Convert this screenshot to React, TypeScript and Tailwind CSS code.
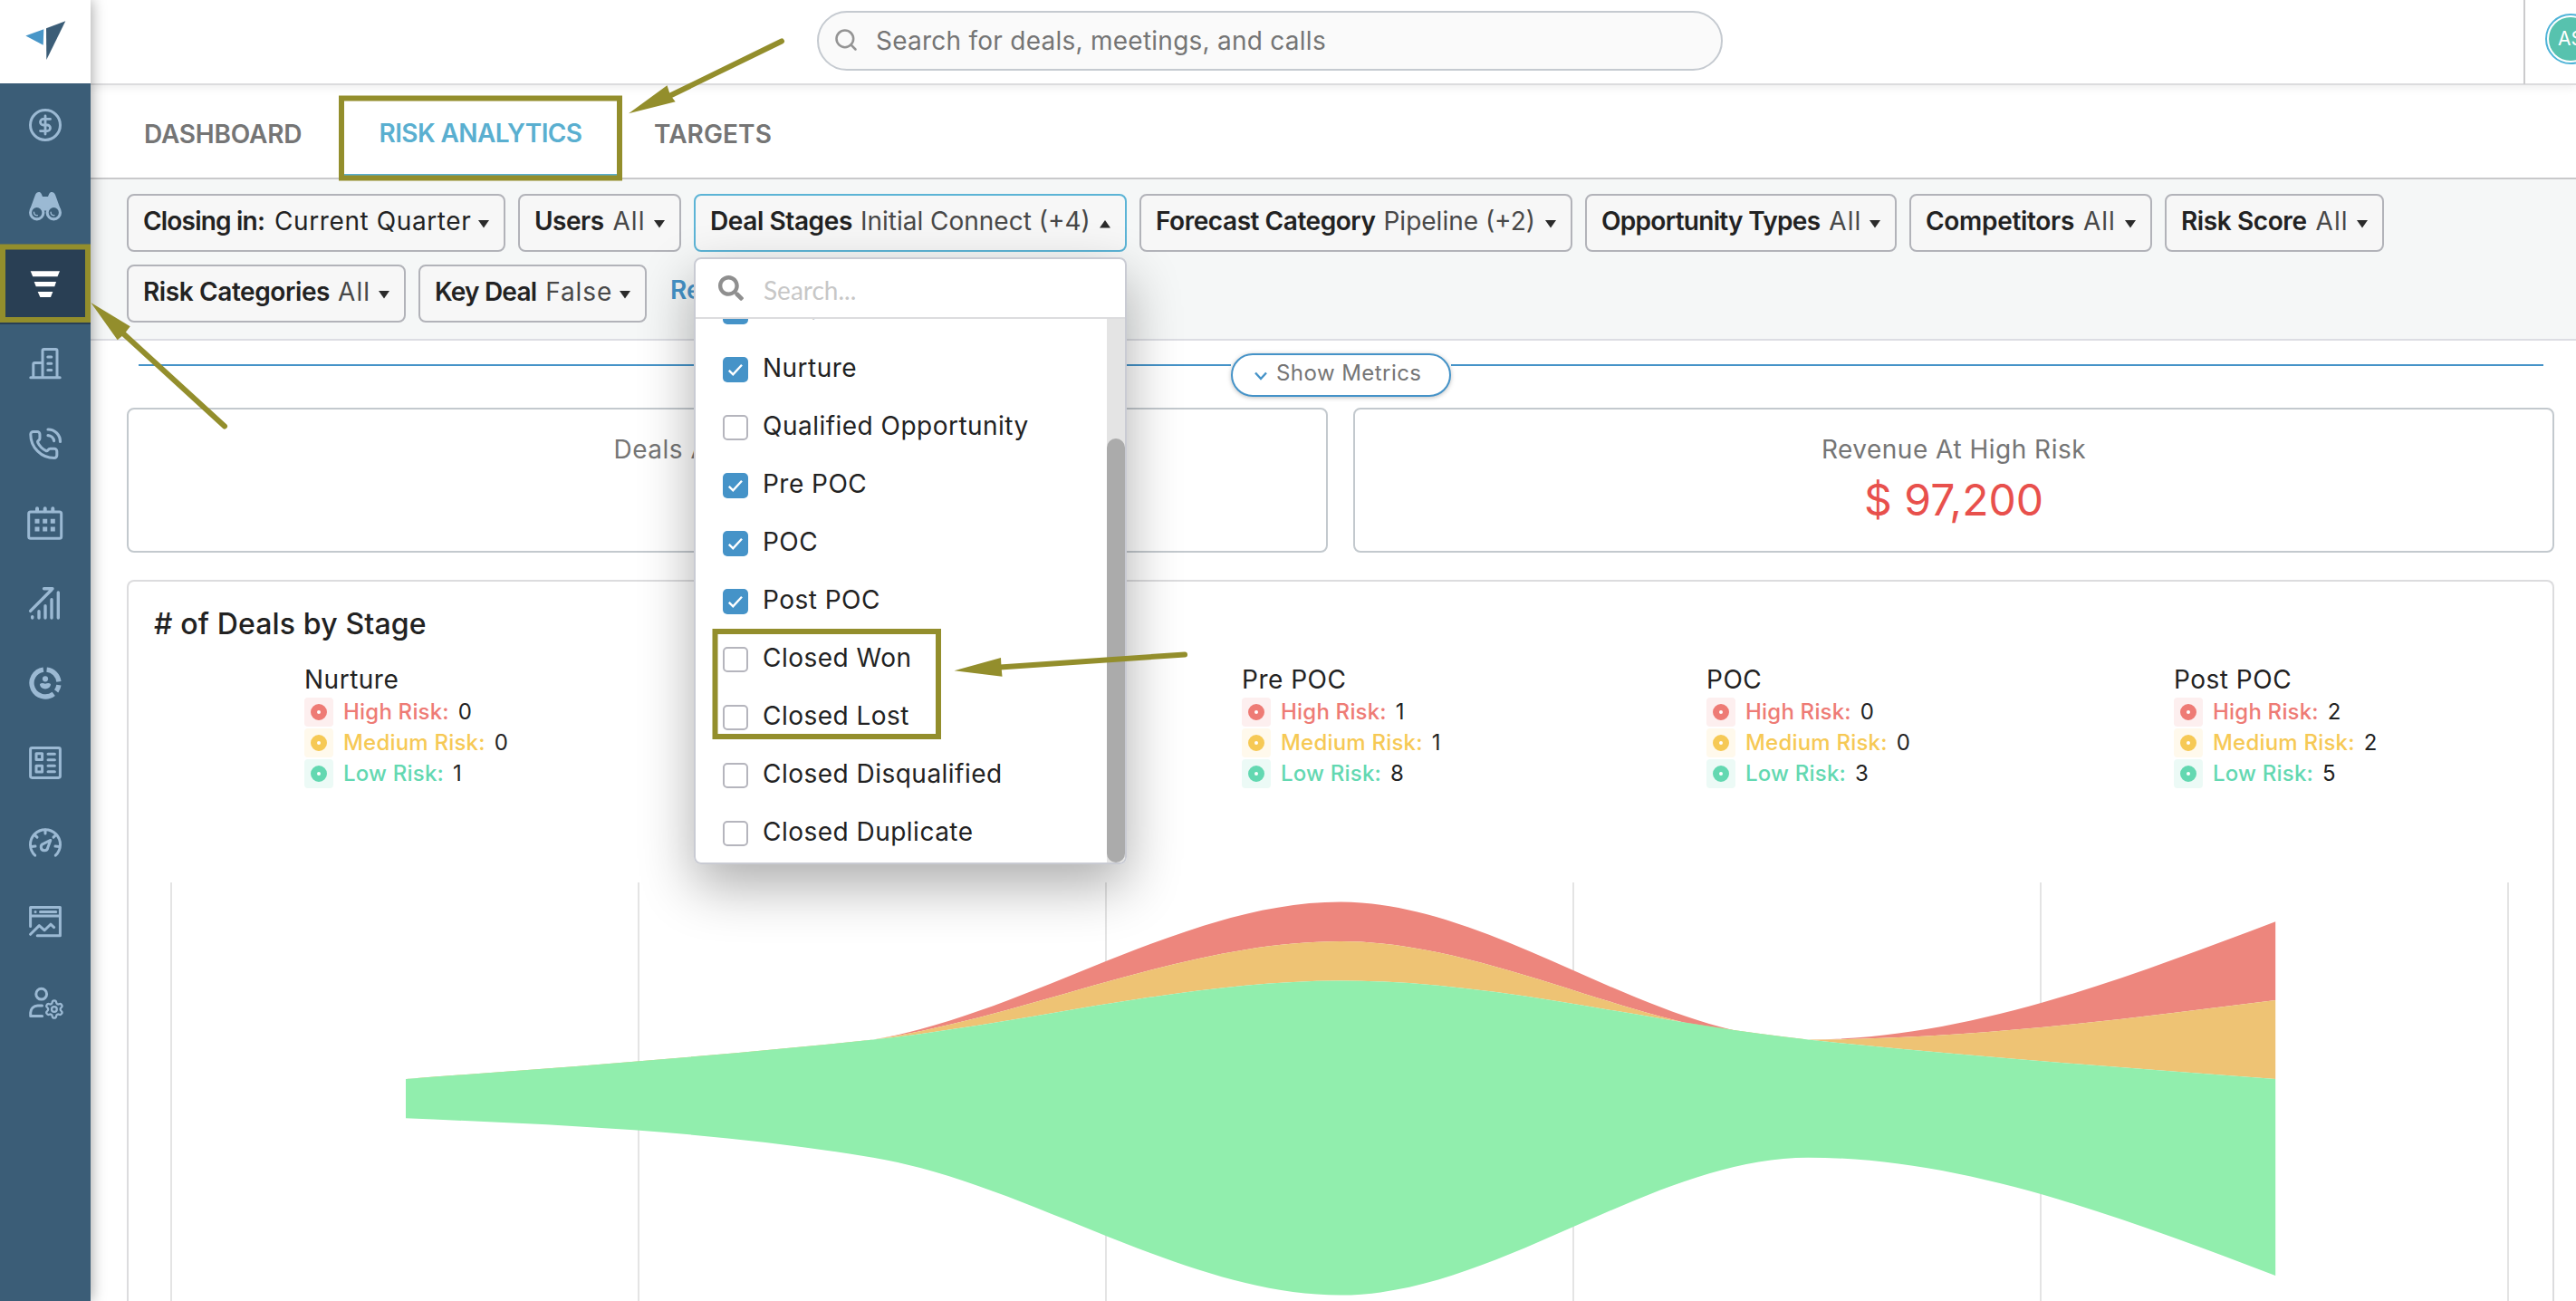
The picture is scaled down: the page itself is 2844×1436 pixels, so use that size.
import React from 'react';
import { Search, Settings } from 'lucide-react';
import { FaSearch } from 'react-icons/fa';
import clsx from 'clsx';

interface StageItem {
  name: string;
  checked: boolean;
}

interface FilterItem {
  label: string;
  value: string;
  width: string;
  labelClass: string;
  valueClass: string;
  open?: boolean;
}

interface StageStat {
  name: string;
  high: number;
  medium: number;
  low: number;
  indent: string;
  hidden?: boolean;
}

const stageOptions: StageItem[] = [
  { name: 'Initial Connect', checked: true },
  { name: 'Nurture', checked: true },
  { name: 'Qualified Opportunity', checked: false },
  { name: 'Pre POC', checked: true },
  { name: 'POC', checked: true },
  { name: 'Post POC', checked: true },
  { name: 'Closed Won', checked: false },
  { name: 'Closed Lost', checked: false },
  { name: 'Closed Disqualified', checked: false },
  { name: 'Closed Duplicate', checked: false },
];

const filters: FilterItem[] = [
  { label: 'Closing in:', value: 'Current Quarter', width: 'w-[418px]', labelClass: 'tracking-[-0.8px]', valueClass: 'ml-[11px] tracking-[0.6px] text-[#222]' },
  { label: 'Users', value: 'All', width: 'w-[180px]', labelClass: 'tracking-[-0.5px]', valueClass: 'ml-[10px] tracking-[1px] text-[#484848]' },
  { label: 'Deal Stages', value: 'Initial Connect (+4)', width: 'w-[478px]', labelClass: 'tracking-[-0.4px]', valueClass: 'ml-[9px] tracking-[0px] text-[#484848]', open: true },
  { label: 'Forecast Category', value: 'Pipeline (+2)', width: 'w-[478px]', labelClass: 'tracking-[-0.45px]', valueClass: 'ml-[9px] tracking-[0px] text-[#484848]' },
  { label: 'Opportunity Types', value: 'All', width: 'w-[344px]', labelClass: 'tracking-[-0.7px]', valueClass: 'ml-[10px] tracking-[1px] text-[#484848]' },
  { label: 'Competitors', value: 'All', width: 'w-[268px]', labelClass: 'tracking-[-0.3px]', valueClass: 'ml-[10px] tracking-[1px] text-[#484848]' },
  { label: 'Risk Score', value: 'All', width: 'w-[242px]', labelClass: 'tracking-[-0.4px]', valueClass: 'ml-[10px] tracking-[1px] text-[#484848]' },
  { label: 'Risk Categories', value: 'All', width: 'w-[308px]', labelClass: 'tracking-[-0.4px]', valueClass: 'ml-[9px] tracking-[1px] text-[#484848]' },
  { label: 'Key Deal', value: 'False', width: 'w-[252px]', labelClass: 'tracking-[-0.8px]', valueClass: 'ml-[10px] tracking-[0.9px] text-[#484848]' },
];

const stages: StageStat[] = [
  { name: 'Nurture', high: 0, medium: 0, low: 1, indent: 'pl-[148px]' },
  { name: 'Qualified Opportunity', high: 0, medium: 0, low: 3, indent: 'pl-[148px]', hidden: true },
  { name: 'Pre POC', high: 1, medium: 1, low: 8, indent: 'pl-[151px]' },
  { name: 'POC', high: 0, medium: 0, low: 3, indent: 'pl-[148px]' },
  { name: 'Post POC', high: 2, medium: 2, low: 5, indent: 'pl-[148px]' },
];

const navIcons: { id: string; active?: boolean; icon: React.ReactNode }[] = [
  {
    id: 'deals',
    icon: (
      <>
        <circle cx="20" cy="20" r="16.5" />
        <path d="M25.5 13.4h-7.7a3.3 3.3 0 0 0 0 6.6h4.4a3.3 3.3 0 0 1 0 6.6h-7.7M20 10v20" strokeWidth="2.8" />
      </>
    ),
  },
  {
    id: 'insights',
    icon: (
      <>
        <path
          d="M2.8 26C5 20 7 14 9 9c.8-2.4 3-3.4 4.8-2.9C15.4 6.6 16 8.5 17 11h6c1-2.5 1.6-4.4 3.2-4.9 1.8-.5 4 .5 4.8 2.9 2 5 4 11 6.2 17l-12 5-3.2-4.500h-4L14.8 31z"
          fill="currentColor"
          stroke="none"
        />
        <circle cx="10.7" cy="28.7" r="8.7" fill="currentColor" stroke="none" />
        <circle cx="29.3" cy="28.7" r="8.7" fill="currentColor" stroke="none" />
        <circle cx="10.7" cy="28.7" r="5.6" fill="#3b5d77" stroke="none" />
        <circle cx="29.3" cy="28.7" r="5.6" fill="#3b5d77" stroke="none" />
        <path d="M7.5 28.2a3.4 3.4 0 0 0 3.8 3.6M26.1 28.2a3.4 3.4 0 0 0 3.8 3.6" strokeWidth="1.4" />
      </>
    ),
  },
  {
    id: 'pipeline',
    active: true,
    icon: (
      <g fill="currentColor" stroke="none">
        <path d="M3.7 5.3H36L33.5 11.3H6.2z" />
        <path d="M7.7 17H32L30.3 22.3H9.7z" />
        <path d="M11.7 28H28.3L26 34H14.3z" />
      </g>
    ),
  },
  {
    id: 'accounts',
    icon: (
      <path d="M3.8 34.7H36.2M17 34V5a1.5 1.5 0 0 1 1.5-1.5h13A1.5 1.5 0 0 1 33 5v29M6.8 34V20a1.5 1.5 0 0 1 1.5-1.5H16M22.8 12h4M22.8 19.3h4M22.8 26.4h4" />
    ),
  },
  {
    id: 'calls',
    icon: (
      <>
        <g transform="translate(.9 3.6) scale(1.45)">
          <path
            strokeWidth="2.1"
            d="M13.832 16.568a1 1 0 0 0 1.213-.303l.355-.465A2 2 0 0 1 17 15h3a2 2 0 0 1 2 2v3a2 2 0 0 1-2 2A18 18 0 0 1 2 4a2 2 0 0 1 2-2h3a2 2 0 0 1 2 2v3a2 2 0 0 1-.8 1.6l-.468.351a1 1 0 0 0-.292 1.233 14 14 0 0 0 6.392 6.384"
          />
        </g>
        <path d="M23 4a13.5 13.5 0 0 1 13.5 13.5M23 10.6a7 7 0 0 1 6.6 6" strokeWidth="3.2" />
      </>
    ),
  },
  {
    id: 'calendar',
    icon: (
      <>
        <rect x="1.7" y="7" width="36" height="29.3" rx="2" />
        <path d="M11 3.2v3M19.7 3.2v3M28.3 3.2v3" strokeWidth="4" />
        <path d="M8.5 17.3h5M17.2 17.3h5M25.8 17.3h5M8.5 26h5M17.2 26h5M25.8 26h5" strokeWidth="5" strokeLinecap="butt" />
      </>
    ),
  },
  {
    id: 'forecast',
    icon: <path d="M5.7 34.6v1.4M13 28.7V36M20 22.7V36M27 15.7V36M34.3 8V36M3.6 28.4 27.4 4.5M18.5 3.7H28" strokeWidth="3.4" />,
  },
  {
    id: 'coaching',
    icon: (
      <>
        <g strokeWidth="5.3" strokeLinecap="butt">
          <path d="M21.6 5.1A15 15 0 0 1 34.9 18.4" />
          <path d="M34.9 22.1A15 15 0 0 1 32.1 28.8" />
          <path d="M29.2 31.8A15 15 0 1 1 17.9 5.1" />
        </g>
        <g fill="currentColor" stroke="none">
          <circle cx="20" cy="15.3" r="3.1" />
          <path d="M14 21c2-1.6 4-1 6-.2 2-.8 4-1.4 6 .2 0 3.4-3 5.4-6 5.4s-6-2-6-5.4z" />
        </g>
      </>
    ),
  },
  {
    id: 'reports',
    icon: (
      <>
        <rect x="3.6" y="3.6" width="32.8" height="32.8" rx="1.8" />
        <path d="M10 9.8h6.6v6.6H10zM10 23.3h6.6v6.6H10zM23 10.3h7.4M23 16.7h7.4M23 23.3h7.4M23 29.7h7.4" />
      </>
    ),
  },
  {
    id: 'performance',
    icon: (
      <>
        <path d="M8.7 34.2A16.5 16.5 0 1 1 31.3 34.2" />
        <path d="M20 6v4M8.6 11.8l2.4 2.3M31.4 11.8l-2.4 2.3M4.5 24.6l4.5-.5M35.5 24.6l-4.5-.5M25.8 17.4l-7.6 3.8a3.8 3.8 0 1 0 4.6 4.4z" />
      </>
    ),
  },
  {
    id: 'dashboards',
    icon: <path d="M3.6 24.4V3.6H36.4V34.7H11.2M4 13.1H36M9 8.5h.1M14.5 8.5H31.8M3.6 33.3 13.3 23.6 19.2 28.8 25.9 22.2 29.6 25.6" />,
  },
  {
    id: 'admin',
    icon: (
      <>
        <circle cx="15.7" cy="11.2" r="5.9" />
        <path d="M16.5 23.9H11.6A8 8 0 0 0 3.7 31.8V35.6H16.6" />
        <Settings x={18.4} y={16.5} size={23} strokeWidth={2.4} />
      </>
    ),
  },
];

const Sidebar = () => (
  <aside className="relative z-10 flex w-[100px] shrink-0 flex-col bg-[#3b5d77] shadow-[0_0_16px_rgba(0,0,0,0.4)]">
    <div className="h-[92px] bg-white">
      <svg width="100" height="92" viewBox="0 0 100 92">
        <path d="M28.3 39.5 48.3 32.3 47.7 49.7z" fill="#4896c8" />
        <path d="M51 31.3 72.3 23.3 51.3 66z" fill="#3b5d77" />
      </svg>
    </div>
    <nav className="flex flex-col pt-[2px]">
      {navIcons.map((item) => (
        <div
          key={item.id}
          className={clsx('flex h-[88px] items-center justify-center', item.active ? 'bg-[#293f54] text-white' : 'text-[#9bb9d3]')}
        >
          <svg width="40" height="40" viewBox="0 0 40 40" fill="none" stroke="currentColor" strokeWidth="3" strokeLinecap="round" strokeLinejoin="round">
            {item.icon}
          </svg>
        </div>
      ))}
    </nav>
  </aside>
);

const Header = () => (
  <header className="relative flex h-[94px] shrink-0 items-center justify-between border-b-2 border-[#dcdcde] shadow-[0_2px_10px_rgba(0,0,0,0.08)]">
    <div className="mb-[2px] ml-[802px] flex h-[66px] w-[1000px] items-center rounded-full border-2 border-[#c5cad0] bg-[#fafafa] pl-4">
      <Search size={28} strokeWidth={2.2} className="mb-[2px] text-[#949494]" />
      <span className="ml-[19px] text-[28px] tracking-[0.25px] text-[#757575]">Search for deals, meetings, and calls</span>
    </div>
    <div className="flex h-[94px] w-[58px] items-start overflow-hidden border-l-2 border-[#cbcbcd] pt-[16px] pl-[22px]">
      <div className="flex size-[56px] shrink-0 items-center justify-center rounded-full border-2 border-[#4fb4d8] bg-white">
        <div className="flex size-[48px] items-center justify-center rounded-full bg-[#57c2ae] text-[21px] text-white">AS</div>
      </div>
    </div>
  </header>
);

const Tabs = () => (
  <div className="flex h-[104px] shrink-0 border-b-2 border-[#c9c9cb] text-[28px] font-semibold text-[#757575]">
    <div className="flex w-[216px] items-center pt-[6px] pl-[59px] tracking-[-0.2px]">DASHBOARD</div>
    <div className="ml-[58px] flex h-[100px] w-[313px] items-center justify-center border-b-2 border-[#5aafd0] pt-[8px] tracking-[-0.6px] text-[#5aafd0]">RISK ANALYTICS</div>
    <div className="ml-[35px] flex items-center pt-[6px] tracking-[0.1px]">TARGETS</div>
  </div>
);

const Caret = ({ up }: { up?: boolean }) => (
  <svg className="mt-[6px] ml-auto" width="12" height="9" viewBox="0 0 12 9" fill="#2b2b2b">
    <path d={up ? 'M0 8.5 6 0 12 8.5z' : 'M0 0H12L6 8.5z'} />
  </svg>
);

const StageMenu = () => (
  <div className="absolute top-[70px] left-0 z-20 flex h-[670px] w-[478px] flex-col overflow-hidden rounded-lg border-2 border-[#c9cbd3] bg-white">
    <div className="flex h-[66px] shrink-0 items-center border-b-2 border-[#dcdcde] pl-[25px]">
      <FaSearch size={28} className="text-[#8f8f8f]" />
      <span className="mt-1 ml-[22px] font-['Lato'] text-[28px] text-[#c7c7c7]">Search...</span>
    </div>
    <div className="flex min-h-0 flex-1">
      <div className="-mt-[40px] flex-1 [clip-path:inset(40px_0_0_0)]">
        {stageOptions.map((stage) => (
          <div key={stage.name} className="flex h-16 items-center pl-[30px]">
            {stage.checked ? (
              <svg width="28" height="28" viewBox="0 0 28 28" fill="none">
                <rect width="28" height="28" rx="5" fill="#4593c8" />
                <path d="M6.8 14.8 11.3 19.3 21 8.8" stroke="#fff" strokeWidth="2.4" />
              </svg>
            ) : (
              <div className="size-[28px] rounded-[5px] border-2 border-[#b5b5bd] bg-white" />
            )}
            <span className="mb-[5px] ml-[16px] text-[28px] tracking-[0.48px] text-[#222]">{stage.name}</span>
          </div>
        ))}
      </div>
      <div className="flex w-[20px] flex-col justify-end bg-[#e4e4e4]">
        <div className="h-[468px] rounded-full bg-[#ababab]" />
      </div>
    </div>
  </div>
);

const FilterBar = () => (
  <div className="flex h-[178px] shrink-0 flex-wrap content-start gap-[14px] border-b-2 border-[#dcdde3] bg-[#f5f7f7] pt-4 pl-10">
    {filters.map((f) => (
      <div key={f.label} className="relative">
        <div
          className={clsx(
            'flex h-16 items-center rounded-lg border-2 bg-[#f7f7f7] pr-4 pb-1 pl-4 text-[28px] whitespace-nowrap',
            f.width,
            f.open ? 'border-[#5cb4d6]' : 'border-[#b2b3b9]'
          )}
        >
          <span className={clsx('font-semibold text-[#222]', f.labelClass)}>{f.label}</span>
          <span className={f.valueClass}>{f.value}</span>
          <Caret up={f.open} />
        </div>
        {f.open && (
          <>
            <div className="absolute top-[70px] left-0 h-[670px] w-[478px] rounded-lg shadow-[0_24px_60px_rgba(0,0,0,0.32)]" />
            <StageMenu />
          </>
        )}
      </div>
    ))}
    <div className="flex h-16 items-center pb-2 pl-[12px] text-[28px] font-semibold text-[#4593c8]">Reset</div>
  </div>
);

const RiskCard = ({ title, value }: { title: string; value: string }) => (
  <div className="flex h-[160px] flex-1 flex-col items-center rounded-lg border-2 border-[#c3c9ce] pt-4">
    <div className="text-[28px] leading-[56px] tracking-[0.5px] text-[#757575]">{title}</div>
    <div className="text-[48px] leading-[56px] text-[#e8504c]">{value}</div>
  </div>
);

const RiskLine = ({ label, value, color, chip }: { label: string; value: number; color: string; chip: string }) => (
  <div className={clsx('flex h-8 items-center text-[24px] font-medium', color)}>
    <div className={clsx('flex size-8 items-center justify-center rounded', chip)}>
      <div className="size-[18px] rounded-full border-[7px] border-current bg-white" />
    </div>
    <span className="ml-[11px] tracking-[0.2px]">{label}</span>
    <span className="ml-[10px] font-normal text-[#222]">{value}</span>
  </div>
);

// Streamgraph geometry
const STEP = 516.05;
const X0 = 306;
const MID = 238.6;
const UNIT = 43.4;

type Point = [number, number];

// Monotone cubic through the points, as an SVG curve without the leading move
const monotone = (pts: Point[]) => {
  const n = pts.length;
  const slopes = pts.slice(1).map((p, i) => (p[1] - pts[i][1]) / (p[0] - pts[i][0]));
  const tangents = pts.map((_, i) => {
    if (i === 0 || i === n - 1) return 0;
    const a = slopes[i - 1];
    const b = slopes[i];
    return (Math.sign(a) + Math.sign(b)) * Math.min(Math.abs(a), Math.abs(b), Math.abs(a + b) / 4);
  });
  tangents[0] = (3 * slopes[0] - tangents[1]) / 2;
  tangents[n - 1] = (3 * slopes[n - 2] - tangents[n - 2]) / 2;
  return pts
    .slice(1)
    .map((p, i) => {
      const q = pts[i];
      const dx = (p[0] - q[0]) / 3;
      return `C${q[0] + dx},${q[1] + dx * tangents[i]} ${p[0] - dx},${p[1] - dx * tangents[i + 1]} ${p[0]},${p[1]}`;
    })
    .join('');
};

const area = (top: Point[], bottom: Point[]) => {
  const back = [...bottom].reverse();
  return `M${top[0][0]},${top[0][1]}${monotone(top)}L${back[0][0]},${back[0][1]}${monotone(back)}Z`;
};

const StreamChart = () => {
  const edge = (pick: (s: StageStat) => number): Point[] =>
    stages.map((s, i) => {
      const total = s.high + s.medium + s.low;
      return [X0 + i * STEP, MID - (total * UNIT) / 2 + pick(s) * UNIT];
    });
  const top = edge(() => 0);
  const highEnd = edge((s) => s.high);
  const mediumEnd = edge((s) => s.high + s.medium);
  const bottom = edge((s) => s.high + s.medium + s.low);

  return (
    <svg className="mt-[104px] shrink-0" width="2676" height="462" viewBox="0 0 2676 462">
      {[0, 1, 2, 3, 4, 5].map((i) => (
        <rect key={i} x={Math.round(46 + i * 516)} y="0" width="2" height="462" fill="#e4e4e4" />
      ))}
      <path d={area(top, highEnd)} fill="#ed867d" />
      <path d={area(highEnd, mediumEnd)} fill="#eec374" />
      <path d={area(mediumEnd, bottom)} fill="#91eead" />
    </svg>
  );
};

const StageChartCard = () => (
  <section className="mt-[30px] mr-[24px] ml-10 flex flex-1 flex-col rounded-t-lg border-2 border-b-0 border-[#dcdcde] pt-[27px]">
    <h2 className="pl-[28px] text-[32px] leading-[40px] font-medium tracking-[0.15px] text-[#222]"># of Deals by Stage</h2>
    <div className="mt-[23px] flex pl-[46px]">
      {stages.map((s) => (
        <div key={s.name} className={clsx('flex w-[516px] flex-col gap-[2px]', s.indent)}>
          {!s.hidden && (
            <>
              <div className="text-[28px] leading-[36px] tracking-[0.5px] text-[#222]">{s.name}</div>
              <RiskLine label="High Risk:" value={s.high} color="text-[#ee7b75]" chip="bg-[#fdefef]" />
              <RiskLine label="Medium Risk:" value={s.medium} color="text-[#f6c955]" chip="bg-[#fff9ec]" />
              <RiskLine label="Low Risk:" value={s.low} color="text-[#63d8b1]" chip="bg-[#ecfaf6]" />
            </>
          )}
        </div>
      ))}
    </div>
    <StreamChart />
  </section>
);

// Callout boxes and arrows laid over the page
const Callouts = () => (
  <svg className="pointer-events-none absolute inset-0 z-30" width="2844" height="1436" viewBox="0 0 2844 1436" fill="none" stroke="#938e2c" strokeWidth="6">
    <rect x="3" y="272.5" width="94" height="80.5" />
    <rect x="377" y="108.5" width="307" height="88" />
    <rect x="789.5" y="697" width="246.5" height="116" />
    <g strokeLinecap="round">
      <path d="M137 369 248 470.5" />
      <path d="M740 105.5 863 45.5" />
      <path d="M1104 736.5 1308 722.5" />
    </g>
    <g fill="#938e2c" stroke="none">
      <path d="M100.3 334 143.7 360.3 137 369 129.7 375.3z" />
      <path d="M694 125.3 736.5 94.3 740 105 745.7 112.3z" />
      <path d="M1053.5 740.3 1105 726 1105.5 736.5 1106.5 746.7z" />
    </g>
  </svg>
);

const App = () => {
  return (
    <div className="relative flex h-[1436px] w-[2844px] overflow-hidden bg-white font-['Inter',sans-serif]">
      <Sidebar />
      <main className="flex min-w-0 flex-1 flex-col">
        <Header />
        <Tabs />
        <FilterBar />
        <div className="flex items-start pt-[14px] pr-[36px] pl-[53px]">
          <div className="mt-3 h-[2px] flex-1 bg-[#4593c8]" />
          <div className="flex h-12 w-[243px] items-center rounded-full border-2 border-[#4593c8] bg-white pb-1 pl-[23px] shadow-[0_1px_5px_rgba(0,0,0,0.25)]">
            <svg className="mt-[6px]" width="16" height="10" viewBox="0 0 16 10" fill="none" stroke="#4593c8" strokeWidth="2.4">
              <path d="M2 1.5 8 8 14 1.5" />
            </svg>
            <span className="ml-[9px] text-[24px] tracking-[0.45px] text-[#757575]">Show Metrics</span>
          </div>
          <div className="mt-3 h-[2px] flex-1 bg-[#4593c8]" />
        </div>
        <div className="mt-3 mr-[24px] ml-10 flex gap-7">
          <RiskCard title="Deals At High Risk" value="4" />
          <RiskCard title="Revenue At High Risk" value="$ 97,200" />
        </div>
        <StageChartCard />
      </main>
      <Callouts />
    </div>
  );
};

export default App;
